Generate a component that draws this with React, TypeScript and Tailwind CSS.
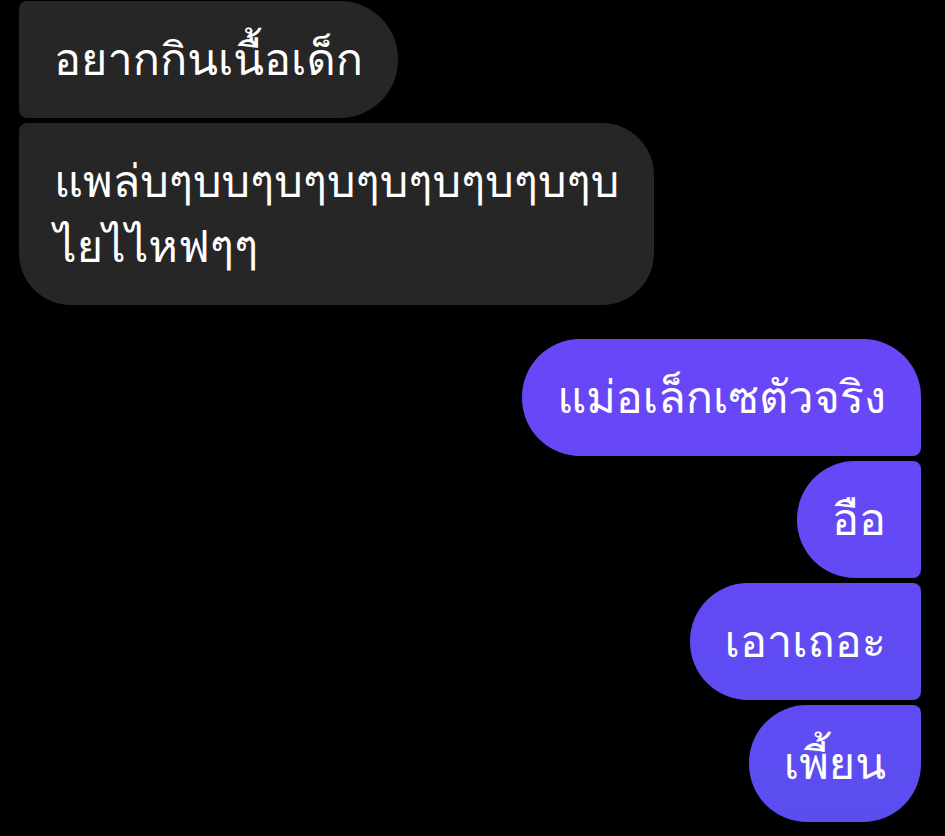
import type { ReactNode } from "react";

type Side = "in" | "out";

// corner rounding per position inside a group of bubbles
const shapes: Record<string, string> = {
  "in-mid": "rounded-tl-[8px] rounded-bl-[8px] rounded-tr-[58px] rounded-br-[58px]",
  "in-last": "rounded-tl-[8px] rounded-bl-[52px] rounded-tr-[52px] rounded-br-[52px]",
  "out-first": "rounded-tl-[58px] rounded-bl-[58px] rounded-tr-[58px] rounded-br-[8px]",
  "out-mid": "rounded-tl-[58px] rounded-bl-[58px] rounded-tr-[8px] rounded-br-[8px]",
  "out-last": "rounded-tl-[58px] rounded-bl-[58px] rounded-tr-[8px] rounded-br-[58px]",
};

function Bubble({ side, shape, children }: { side: Side; shape: string; children: ReactNode }) {
  const color =
    side === "in"
      ? "bg-[#262626]"
      : "bg-linear-to-b from-[#743ffe] to-[#5a4ef0] bg-fixed";
  return (
    <div
      className={`${color} ${shapes[shape]} px-[35px] py-[26px] text-[45px] leading-[65px] text-white whitespace-nowrap`}
    >
      {children}
    </div>
  );
}

export default function App() {
  return (
    <div
      className="min-h-[836px] bg-black pt-px pl-[19px] pr-[24px] flex flex-col"
      style={{
        fontFamily: 'Loma, "Noto Sans Thai Looped", "Noto Sans", sans-serif',
      }}
    >
      {/* incoming */}
      <div className="flex flex-col items-start gap-[5px]">
        <Bubble side="in" shape="in-mid">อยากกินเนื้อเด็ก</Bubble>
        <Bubble side="in" shape="in-last">
          แพล่บๆบบๆบๆบๆบๆบๆบๆบๆบ
          <br />
          ไยไไหฟๆๆ
        </Bubble>
      </div>

      {/* outgoing */}
      <div className="flex flex-col items-end gap-[5px] mt-[34px]">
        <Bubble side="out" shape="out-first">แม่อเล็กเซตัวจริง</Bubble>
        <Bubble side="out" shape="out-mid">อือ</Bubble>
        <Bubble side="out" shape="out-mid">เอาเถอะ</Bubble>
        <Bubble side="out" shape="out-last">เพี้ยน</Bubble>
      </div>
    </div>
  );
}
